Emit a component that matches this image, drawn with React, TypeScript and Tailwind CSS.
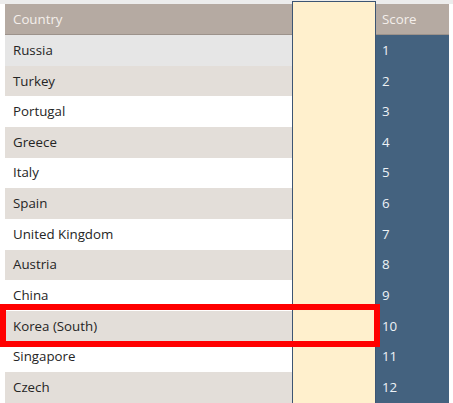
import React from "react";

const countries = [
  "Russia",
  "Turkey",
  "Portugal",
  "Greece",
  "Italy",
  "Spain",
  "United Kingdom",
  "Austria",
  "China",
  "Korea (South)",
  "Singapore",
  "Czech",
];

function rowBg(i: number) {
  if (i === 0) return "bg-[#e6e6e6]";
  return i % 2 === 1 ? "bg-[#e3ded9]" : "bg-white";
}

export default function App() {
  return (
    <div
      className="relative w-[453px] h-[403px] overflow-hidden bg-white text-[13.3px] text-[#252525]"
      style={{ fontFamily: '"Open Sans", "Noto Sans", sans-serif' }}
    >
      <div className="h-[4px] bg-[#ececec]" />
      <div className="flex items-start pl-[5px]">
        <div className="w-[287px] flex flex-col">
          <div className="h-[31px] flex items-center pl-[8px] pt-[1px] bg-[#b5aaa2] text-[#f4efeb] border-b border-[#9c928b]">
            Country
          </div>
          {countries.map((c, i) => (
            <div
              key={c}
              className={`h-[30.67px] flex items-center pl-[8px] pt-[1px] ${rowBg(i)}`}
            >
              {c}
            </div>
          ))}
        </div>
        <div className="w-[84px] h-[410px] -mt-[3px] bg-[#fff0cd] border border-[#3d5573]" />
        <div className="w-[73px] flex flex-col">
          <div className="h-[31px] flex items-center pl-[6px] pt-[1px] bg-[#b5aaa2] text-[#f4efeb] border-b border-[#9c928b]">
            Score
          </div>
          {countries.map((c, i) => (
            <div
              key={c}
              className="h-[30.67px] flex items-center pl-[6px] pt-[1px] bg-[#44627f] text-[#eef2f6]"
            >
              {i + 1}
            </div>
          ))}
        </div>
      </div>
      <div className="absolute left-0 top-[304px] w-[380px] h-[43px] border-[6px] border-[#ff0000]" />
    </div>
  );
}
